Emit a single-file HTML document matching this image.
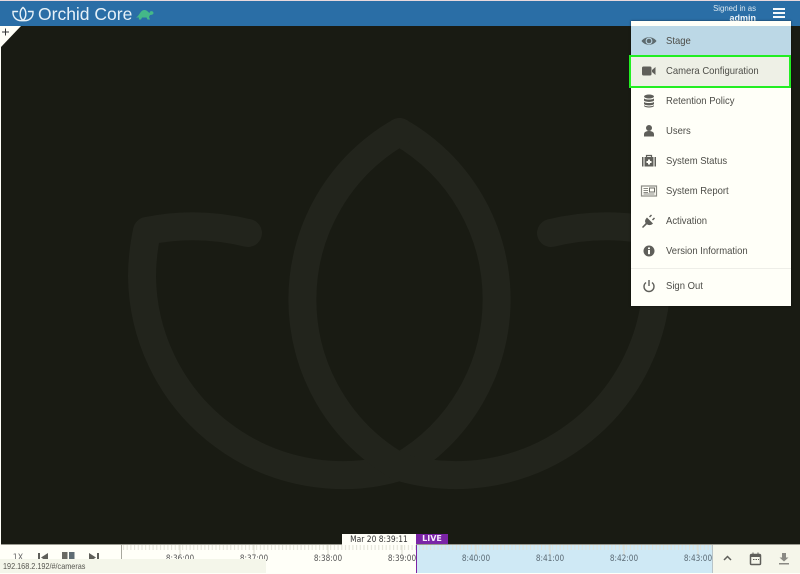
<!DOCTYPE html>
<html><head><meta charset="utf-8"><style>
html,body{margin:0;padding:0;width:800px;height:573px;overflow:hidden;background:#fffff8;font-family:"Liberation Sans",sans-serif}
.a{position:absolute}
#top{left:0;top:1px;width:800px;height:25px;background:#2a6ea6}
#stage{left:1px;top:26px;width:799px;height:519px;background:#191b13}
#menu{left:631px;top:21px;width:160px;height:285px;background:#fffff8;box-shadow:0 0 2px rgba(0,0,0,.6)}
.item{position:absolute;left:0;width:160px;height:30px;line-height:30px;font-size:10.2px;color:#4d4d48}
.item span{position:absolute;left:35px;top:1px;white-space:nowrap;transform:scaleX(.93);transform-origin:0 50%}
.item svg{position:absolute;left:9px;top:7px}
.lab{position:absolute;top:553px;font:8.4px "DejaVu Sans",sans-serif;white-space:nowrap;transform:translateX(-50%) scaleX(.875);line-height:10px}
</style></head><body>
<div class="a" style="left:0;top:0;width:800px;height:1px;background:#e8d8dc"></div>
<div id="top" class="a"></div>
<svg class="a" style="left:11px;top:6px" width="24" height="17" viewBox="0 0 24 17" fill="none" stroke="#e8f2f8" stroke-width="1.4" stroke-linecap="round"><path d="M12 1.500C8.500 4 8 11 12 14.500C16 11 15.500 4 12 1.500Z"/><path d="M6.500 5.500L2 5.500C1.500 11 5.500 15.500 12 14.500C18.500 15.500 22.500 11 22 5.500L17.500 5.500"/></svg>
<div class="a" style="left:38px;top:4px;font-size:17.5px;line-height:21px;color:#e6f1f8;white-space:nowrap">Orchid Core</div>
<svg class="a" style="left:136px;top:9px" width="18" height="11" viewBox="0 0 18 11" fill="#44b888"><path d="M0 8.500C3 7.500 4 1.500 8 1C11 .8 12.500 3.500 13.500 4L14 2.500C15.500 1.500 17.500 2.500 17.500 4C17.500 5.500 15.500 6 14 6L13 8L14 10.500H11.500L10.500 8.500H6L5 10.500H2.800L3 8.500Z"/></svg>
<div class="a" style="left:684px;top:4px;width:72px;text-align:right;font-size:7.8px;line-height:10px;color:#dbe8f1;white-space:nowrap">Signed in as</div>
<div class="a" style="left:684px;top:13px;width:72px;text-align:right;font-size:9px;font-weight:bold;line-height:10px;color:#eef5fa">admin</div>
<div class="a" style="left:773px;top:8px;width:12px;height:2px;background:#f4f8fb"></div>
<div class="a" style="left:773px;top:12px;width:12px;height:2px;background:#f4f8fb"></div>
<div class="a" style="left:773px;top:16px;width:12px;height:2px;background:#f4f8fb"></div>

<div id="stage" class="a"></div>
<svg class="a" style="left:0;top:26px" width="800" height="519" viewBox="0 26 800 519" fill="none" stroke="#22241c" stroke-width="28" stroke-linecap="round" stroke-linejoin="round">
<path d="M248 233C215 225 180 224 147 231C143 250 142 262 142 276A201 201 0 0 0 399.500 467A193 193 0 0 0 399.500 132"/>
<path d="M551 233C584 225 619 224 652 231C656 250 657 262 657 276A201 201 0 0 1 399.500 467A193 193 0 0 1 399.500 132"/>
</svg>
<svg class="a" style="left:0;top:26px" width="22" height="22"><path d="M0 0H21L1 21H0Z" fill="#fffff8"/><path d="M2 6H9M5.500 2.500V9.500" stroke="#333" stroke-width="1"/></svg>

<div id="menu" class="a">
 <div class="a" style="left:0;top:5px;width:160px;height:30px;background:#bcd8e6"></div>
 <div class="a" style="left:-2px;top:34px;width:158px;height:29px;background:#eef0e6;border:2px solid #22ee22"></div>
 <div class="item" style="top:5px"><svg width="18" height="16" viewBox="0 0 18 16"><path d="M1.500 8C5 3 13 3 16.500 8C13 13 5 13 1.500 8Z" fill="#5d6a6e"/><circle cx="9" cy="8" r="3.400" fill="#bcd8e6"/><circle cx="9" cy="8" r="2.300" fill="#5d6a6e"/></svg><span>Stage</span></div>
 <div class="item" style="top:35px"><svg width="18" height="16" viewBox="0 0 18 16" fill="#5f5f5a"><rect x="2" y="3.500" width="9.500" height="9" rx="1.500"/><path d="M12 7L15.500 4V12L12 9Z"/></svg><span>Camera Configuration</span></div>
 <div class="item" style="top:65px"><svg width="18" height="16" viewBox="0 0 18 16" fill="#5f5f5a"><ellipse cx="9" cy="3.500" rx="5" ry="2"/><path d="M4 5.200C5 7 13 7 14 5.200V7.500C13 9.300 5 9.300 4 7.500Z"/><path d="M4 8.700C5 10.500 13 10.500 14 8.700V11C13 12.800 5 12.800 4 11Z"/><path d="M4 12C5 13.800 13 13.800 14 12V13C13 15 5 15 4 13Z"/></svg><span>Retention Policy</span></div>
 <div class="item" style="top:95px"><svg width="18" height="16" viewBox="0 0 18 16" fill="#5f5f5a"><circle cx="9" cy="5" r="3"/><path d="M4 13.500V11.500C4 9 6 8 9 8C12 8 14 9 14 11.500V13.500Z"/></svg><span>Users</span></div>
 <div class="item" style="top:125px"><svg width="18" height="16" viewBox="0 0 18 16"><path d="M6.500 4V2.500H11.500V4" fill="none" stroke="#5f5f5a" stroke-width="1.200"/><rect x="2" y="4" width="14" height="9.500" fill="#5f5f5a"/><rect x="3.500" y="4" width="1" height="9.500" fill="#fffff8"/><rect x="13.500" y="4" width="1" height="9.500" fill="#fffff8"/><path d="M8 6.500H10V8H11.500V10H10V11.500H8V10H6.500V8H8Z" fill="#fffff8"/></svg><span>System Status</span></div>
 <div class="item" style="top:155px"><svg width="18" height="16" viewBox="0 0 18 16"><rect x="1.500" y="3" width="15" height="10" fill="#fffff8" stroke="#8a8a84" stroke-width="1.200"/><rect x="9.500" y="5" width="5" height="4" fill="none" stroke="#6a6a64"/><path d="M3.500 5.500H8M3.500 7.500H8M3.500 9.500H8M3.500 11H14.500" stroke="#8a8a84"/></svg><span>System Report</span></div>
 <div class="item" style="top:185px"><svg width="18" height="16" viewBox="0 0 18 16" fill="#5f5f5a"><path d="M7 4.500L13 10.500C11 12.500 8.500 12.500 7 11.300L3 15L2 14L5.700 10C4.500 8.500 5 6.500 7 4.500Z"/><path d="M9 3.500L11 1.500L12 2.500L10 4.500ZM12 6.500L14 4.500L15 5.500L13 7.500Z"/></svg><span>Activation</span></div>
 <div class="item" style="top:215px"><svg width="18" height="16" viewBox="0 0 18 16"><circle cx="9" cy="8" r="5.500" fill="#5f5f5a"/><rect x="8" y="7" width="2" height="4.200" fill="#fffff8"/><rect x="8" y="4.500" width="2" height="1.600" fill="#fffff8"/></svg><span>Version Information</span></div>
 <div class="a" style="left:0;top:247px;width:160px;height:1px;background:#eeeee8"></div>
 <div class="item" style="top:250px"><svg width="18" height="16" viewBox="0 0 18 16" fill="none" stroke="#5f5f5a" stroke-width="1.400"><path d="M6 4.500A5 5 0 1 0 12 4.500"/><path d="M9 2V8"/></svg><span>Sign Out</span></div>
</div>

<div class="a" style="left:0;top:545px;width:800px;height:28px;background:#fffff8"></div>
<div class="a" style="left:1px;top:544px;width:799px;height:1px;background:#9a9a90"></div>
<div class="a" style="left:416px;top:545px;width:296px;height:28px;background:#cfe9f5"></div>
<svg class="a" style="left:122px;top:545px" width="590" height="15"><defs><pattern id="t" width="3.700" height="6" patternUnits="userSpaceOnUse"><rect x="1" y="0" width="1" height="5" fill="#e2e2d6"/></pattern></defs><rect width="590" height="6" fill="url(#t)"/><path d="M58 0V10M132 0V10M206 0V10M280 0V10M354 0V10M428 0V10M502 0V10M576 0V10" stroke="#dcdcd0"/></svg>
<div class="a" style="left:121px;top:545px;width:1px;height:15px;background:#a8a89e"></div>
<div class="a" style="left:712px;top:545px;width:88px;height:28px;background:#f5f6ea;border-left:1px solid #b8c4c8;box-sizing:border-box"></div>
<div class="lab" style="left:180px;color:#555">8:36:00</div>
<div class="lab" style="left:254px;color:#555">8:37:00</div>
<div class="lab" style="left:328px;color:#555">8:38:00</div>
<div class="lab" style="left:402px;color:#555">8:39:00</div>
<div class="lab" style="left:476px;color:#5b6a74">8:40:00</div>
<div class="lab" style="left:550px;color:#5b6a74">8:41:00</div>
<div class="lab" style="left:624px;color:#5b6a74">8:42:00</div>
<div class="lab" style="left:698px;color:#5b6a74">8:43:00</div>
<div class="a" style="left:416px;top:545px;width:1px;height:28px;background:#7b24a6"></div>
<div class="a" style="left:342px;top:534px;width:74px;height:11px;background:#fffff8"></div>
<div class="a" style="left:342px;top:534px;width:74px;height:11px;font:8.400px/11px 'DejaVu Sans',sans-serif;color:#333;text-align:center;transform:scaleX(.9);white-space:nowrap">Mar 20 8:39:11</div>
<div class="a" style="left:416px;top:534px;width:32px;height:10px;background:#7b24a6;font:bold 8px/10px 'DejaVu Sans',sans-serif;color:#f4e8fa;text-align:center">LIVE</div>

<div class="lab" style="left:18px;color:#666;font-size:9px">1X</div>
<svg class="a" style="left:36px;top:551px" width="68" height="12" fill="#5f5f5a"><path d="M2 2H4V11H2ZM12 2V11L5 6.500Z"/><rect x="26" y="1" width="5.500" height="10" fill="#6a6a64"/><rect x="33" y="1" width="5.500" height="10" fill="#5f6c74"/><path d="M53 2V11L60 6.500ZM61 2H63V11H61Z"/></svg>
<div class="a" style="left:0;top:559px;width:266px;height:14px;background:#f4f6ea"></div>
<div class="a" style="left:3px;top:559px;font-size:8.500px;line-height:15px;color:#55554f;white-space:nowrap;transform:scaleX(.855);transform-origin:0 50%">192.168.2.192/#/cameras</div>

<svg class="a" style="left:720px;top:551px" width="72" height="16" fill="none"><path d="M4 9L7.500 5.500L11 9" stroke="#5f5f5a" stroke-width="1.500"/><rect x="30.500" y="3.500" width="10" height="10" rx="1" stroke="#5f5f5a" stroke-width="1.500"/><rect x="30.500" y="3" width="10" height="3" fill="#5f5f5a"/><path d="M33 1.500V4M38 1.500V4" stroke="#5f5f5a"/><path d="M33 8.500H34.500M35.500 8.500H37M38 8.500H39" stroke="#5f5f5a"/><path d="M62 2H66V6.500H68.500L64 10.500L59.500 6.500H62Z" fill="#8a8a84"/><rect x="59" y="12" width="10" height="1.500" fill="#8a8a84"/></svg>
</body></html>
